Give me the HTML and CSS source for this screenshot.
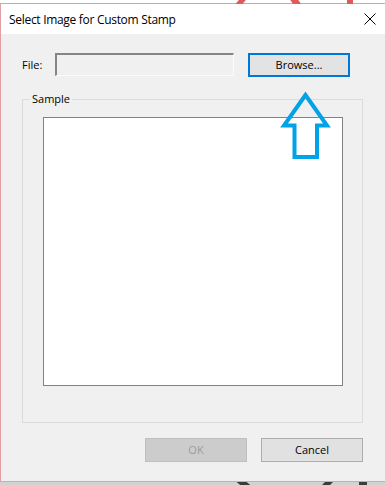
FILE: index.html
```html
<!DOCTYPE html>
<html>
<head>
<meta charset="utf-8">
<link rel="stylesheet" href="styles.css">
</head>
<body>
<div class="screen">
  <div class="backdrop-top">
    <span class="mark mark-a"></span>
    <span class="mark mark-b"></span>
    <span class="mark mark-c"></span>
  </div>
  <div class="window">
    <div class="titlebar">
      <span class="title">Select Image for Custom Stamp</span>
      <svg class="close" width="12" height="12" viewBox="0 0 12 12">
        <path d="M0.5 0.5 L11.5 11.5 M11.5 0.5 L0.5 11.5" stroke="#000" stroke-width="1" fill="none"/>
      </svg>
    </div>
    <div class="content">
      <div class="file-row">
        <span class="file-label">File:</span>
        <div class="file-input"></div>
        <button class="btn btn-focus">Browse...</button>
      </div>
      <div class="group">
        <span class="group-label">Sample</span>
        <div class="preview"></div>
      </div>
      <div class="buttons">
        <button class="btn btn-disabled">OK</button>
        <button class="btn">Cancel</button>
      </div>
    </div>
  </div>
  <div class="backdrop-bottom">
    <span class="dmark dmark-a"></span>
    <span class="dmark dmark-b"></span>
    <span class="dmark dmark-c"></span>
  </div>
  <svg class="arrow" width="385" height="485" viewBox="0 0 385 485">
    <polygon points="305.5,95 284,125.5 294.5,125.5 294.5,157 317,157 317,125.5 327,125.5" fill="none" stroke="#00a2e8" stroke-width="4" stroke-linejoin="miter"/>
  </svg>
</div>
</body>
</html>
```

FILE: styles.css
```css
* { box-sizing: border-box; }
html, body { margin: 0; padding: 0; }
body {
  width: 385px;
  height: 485px;
  overflow: hidden;
  background: #ffffff;
  font-family: "Open Sans", "Noto Sans", sans-serif;
  font-size: 11px;
  color: #000;
}
.screen {
  position: relative;
  width: 385px;
  height: 485px;
  overflow: hidden;
}
.backdrop-top {
  position: relative;
  height: 3px;
  background: #ffffff;
}
.mark {
  position: absolute;
  top: -2px;
  height: 6px;
  background: #e05a5a;
}
.mark-a { left: 238px; width: 7px; transform: skewX(-40deg); }
.mark-b { left: 291px; width: 8px; transform: skewX(35deg); }
.mark-c { left: 347px; width: 6px; }

.window {
  width: 420px;
  height: 479px;
  border-top: 1px solid #d9a3a6;
  border-left: 1px solid #e0a0a4;
  border-bottom: 1px solid #e4a2a6;
  background: #f0f0f0;
  display: flex;
  flex-direction: column;
}
.titlebar {
  height: 30px;
  background: #ffffff;
  display: flex;
  align-items: center;
  position: relative;
  flex: none;
}
.title {
  margin-left: 8px;
  font-size: 12px;
  letter-spacing: -0.3px;
}
.close {
  position: absolute;
  left: 363px;
  top: 9px;
}
.content {
  flex: 1;
  padding: 19px 0 0 21px;
  display: flex;
  flex-direction: column;
  width: 362px;
  box-sizing: content-box;
}
.file-row {
  display: flex;
  align-items: flex-start;
  height: 24px;
}
.file-label {
  width: 33px;
  line-height: 24px;
}
.file-input {
  width: 179px;
  height: 23px;
  background: #f0f0f0;
  border-top: 2px solid #858585;
  border-left: 2px solid #858585;
  border-right: 1px solid #fbfbfb;
  border-bottom: 1px solid #fbfbfb;
  margin-right: 14px;
}
.btn {
  width: 102px;
  height: 24px;
  padding: 0;
  font-family: inherit;
  font-size: 11px;
  color: #000;
  background: #e1e1e1;
  border: 1px solid #adadad;
  border-radius: 0;
  line-height: 20px;
}
.btn-focus {
  border: 2px solid #0078d7;
  background: #e3e3e3;
}
.btn-disabled {
  background: #cccccc;
  border-color: #bfbfbf;
  color: #9d9d9d;
}
.group {
  position: relative;
  margin-top: 22px;
  width: 341px;
  height: 324px;
  border: 1px solid #dcdcdc;
  padding: 17px 0 0 20px;
}
.group-label {
  position: absolute;
  left: 7px;
  top: -9px;
  padding: 0 2px;
  background: #f0f0f0;
  line-height: 16px;
}
.preview {
  width: 300px;
  height: 269px;
  background: #ffffff;
  border: 1px solid #828282;
}
.buttons {
  margin-top: 15px;
  width: 341px;
  display: flex;
  justify-content: flex-end;
  gap: 14px;
}
.backdrop-bottom {
  position: relative;
  height: 3px;
  background: #d2d2d2;
}
.dmark {
  position: absolute;
  top: 0;
  height: 4px;
  background: #3c3c3c;
}
.dmark-a { left: 239px; width: 10px; transform: skewX(50deg); }
.dmark-b { left: 323px; width: 8px; transform: skewX(-45deg); }
.dmark-c { left: 359px; width: 8px; }
.arrow {
  position: absolute;
  left: 0;
  top: 0;
  pointer-events: none;
}
```
